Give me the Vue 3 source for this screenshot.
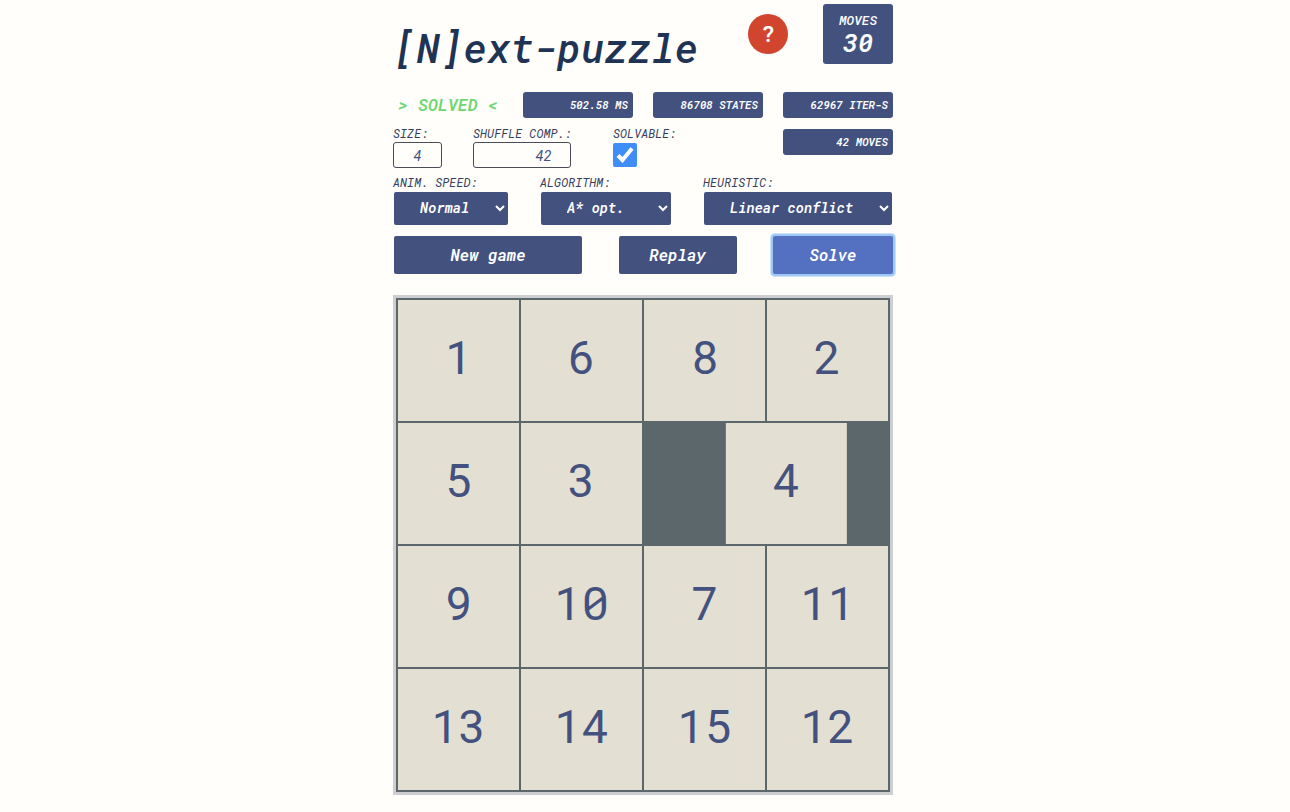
<script setup>
import { ref } from 'vue'

const stats = ['502.58 MS', '86708 STATES', '62967 ITER-S']
const size = ref('4')
const shuffle = ref('42')
const solvable = ref(true)
const speed = ref('Normal')
const algorithm = ref('A* opt.')
const heuristic = ref('Linear conflict')

// 0 marks the hole; shift is the part of a tile already travelled to the left
const tiles = [1, 6, 8, 2, 5, 3, 0, 4, 9, 10, 7, 11, 13, 14, 15, 12]
const moving = { value: 4, shift: 34 }

function tileStyle(tile) {
  return tile === moving.value ? { transform: `translateX(-${moving.shift}%)` } : null
}
</script>

<template>
  <main class="page">
    <div class="game">
      <header class="header">
        <h1 class="title">[N]ext-puzzle</h1>
        <button class="help" type="button" aria-label="Help">?</button>
        <div class="moves">
          <span class="moves-label">MOVES</span>
          <span class="moves-count">30</span>
        </div>
      </header>

      <section class="results">
        <span class="status">&gt; SOLVED &lt;</span>
        <span v-for="stat in stats" :key="stat" class="stat">{{ stat }}</span>
      </section>

      <section class="settings">
        <div class="field field-size">
          <label for="size">SIZE:</label>
          <input id="size" v-model="size" class="box box-center" type="text" />
        </div>
        <div class="field field-shuffle">
          <label for="shuffle">SHUFFLE COMP.:</label>
          <input id="shuffle" v-model="shuffle" class="box box-right" type="text" />
        </div>
        <div class="field">
          <label for="solvable">SOLVABLE:</label>
          <span class="tick">
            <input id="solvable" v-model="solvable" type="checkbox" />
            <svg v-if="solvable" viewBox="0 0 24 24" aria-hidden="true">
              <path d="M5 12.5 9.5 17 19 5.5" />
            </svg>
          </span>
        </div>
        <span class="stat stat-last">42 MOVES</span>
      </section>

      <section class="selects">
        <div class="field speed">
          <label for="speed">ANIM. SPEED:</label>
          <div class="select">
            <select id="speed" v-model="speed">
              <option>Normal</option>
            </select>
            <svg viewBox="0 0 10 6" aria-hidden="true"><path d="M1 1l4 4 4-4" /></svg>
          </div>
        </div>
        <div class="field algorithm">
          <label for="algorithm">ALGORITHM:</label>
          <div class="select">
            <select id="algorithm" v-model="algorithm">
              <option>A* opt.</option>
            </select>
            <svg viewBox="0 0 10 6" aria-hidden="true"><path d="M1 1l4 4 4-4" /></svg>
          </div>
        </div>
        <div class="field heuristic">
          <label for="heuristic">HEURISTIC:</label>
          <div class="select">
            <select id="heuristic" v-model="heuristic">
              <option>Linear conflict</option>
            </select>
            <svg viewBox="0 0 10 6" aria-hidden="true"><path d="M1 1l4 4 4-4" /></svg>
          </div>
        </div>
      </section>

      <section class="actions">
        <button class="action new-game" type="button">New game</button>
        <button class="action replay" type="button">Replay</button>
        <button class="action solve" type="button">Solve</button>
      </section>

      <section class="board">
        <div
          v-for="tile in tiles"
          :key="tile"
          class="tile"
          :class="{ hole: tile === 0 }"
          :style="tileStyle(tile)"
        >{{ tile || '' }}</div>
      </section>
    </div>
  </main>
</template>

<style>
body {
  background: #fffefa;
}
</style>

<style scoped>
.page {
  display: flex;
  justify-content: center;
  padding: 4px 4px 16px 0;
  color: #35405f;
  font: italic 14px 'Roboto Mono', 'DejaVu Sans Mono', monospace;
}

.page * {
  box-sizing: border-box;
}

button,
input,
select {
  margin: 0;
  font: inherit;
}

.game {
  width: 100%;
  max-width: 500px;
}

.header {
  display: flex;
  align-items: flex-start;
}

.title {
  flex: 1;
  margin: 20px 0 0;
  color: #1f3355;
  font-size: 40px;
  font-weight: 500;
  line-height: 48px;
  white-space: nowrap;
}

.help {
  width: 40px;
  height: 40px;
  margin: 10px 35px 0 0;
  padding: 0 0 2px;
  border: 0;
  border-radius: 50%;
  background: #d1442d;
  color: #fff;
  font: 600 22px 'Roboto Mono', Roboto, monospace;
}

.moves {
  display: flex;
  flex-direction: column;
  align-items: center;
  width: 70px;
  height: 60px;
  padding-top: 8px;
  border-radius: 3px;
  background: #43517f;
  color: #fff;
}

.moves-label {
  font-size: 13px;
  font-weight: 500;
  line-height: 16px;
}

.moves-count {
  font-size: 26px;
  font-weight: 600;
  line-height: 28px;
}

.results {
  display: flex;
  gap: 20px;
  margin-top: 20px;
}

.status {
  flex: 1;
  padding-left: 5px;
  color: #6fd772;
  font-size: 17px;
  font-weight: 600;
  line-height: 26px;
  white-space: nowrap;
}

.stat {
  width: 110px;
  height: 26px;
  padding-right: 5px;
  border-radius: 3px;
  background: #43517f;
  color: #fff;
  font-size: 11px;
  font-weight: 600;
  line-height: 26px;
  text-align: right;
}

.settings {
  display: flex;
  margin-top: 8px;
}

.field label {
  display: block;
  padding-bottom: 2px;
  font-size: 12px;
  line-height: 14px;
  white-space: nowrap;
}

.field-size {
  width: 80px;
}

.field-shuffle {
  width: 140px;
}

.box {
  display: block;
  height: 26px;
  border: 1px solid #4a4d58;
  border-radius: 3px;
  background: #fffefa;
  color: #43517f;
}

.box-center {
  width: 49px;
  text-align: center;
}

.box-right {
  width: 98px;
  padding-right: 18px;
  text-align: right;
}

.tick {
  position: relative;
  display: block;
  width: 24px;
  height: 24px;
  margin-top: 1px;
}

.tick input {
  display: block;
  width: 24px;
  height: 24px;
  border-radius: 2px;
  background: #3f8ef7;
  appearance: none;
}

.tick svg {
  position: absolute;
  inset: 0;
  fill: none;
  stroke: #fff;
  stroke-width: 4;
  pointer-events: none;
}

.stat-last {
  margin: 3px 0 0 auto;
}

.selects {
  display: flex;
  justify-content: space-between;
  margin-top: 7px;
}

.speed {
  width: 116px;
}

.algorithm {
  width: 132px;
}

.heuristic {
  width: 190px;
}

.select {
  position: relative;
  margin: 1px 1px 0;
}

.select select {
  display: block;
  width: 100%;
  height: 33px;
  padding: 0 0 2px 26px;
  border: 0;
  border-radius: 2px;
  background: #43517f;
  color: #fff;
  font-weight: 600;
  appearance: none;
}

.select svg {
  position: absolute;
  top: 13px;
  right: 3px;
  width: 10px;
  height: 6px;
  overflow: visible;
  fill: none;
  stroke: #fff;
  stroke-width: 2;
  pointer-events: none;
}

.actions {
  display: flex;
  justify-content: space-between;
  margin: 11px 0 0;
  padding-left: 1px;
}

.action {
  height: 38px;
  padding: 0 0 2px;
  border: 0;
  border-radius: 2px;
  background: #43517f;
  color: #fff;
  font-size: 16px;
  font-weight: 600;
}

.new-game {
  width: 188px;
}

.replay {
  width: 118px;
}

.solve {
  width: 120px;
  background: #5470c0;
  box-shadow: 0 0 0 2px #9cc9f8, 0 0 0 3px #cfe2f8;
}

.board {
  display: grid;
  grid-template-columns: repeat(4, 1fr);
  gap: 2px;
  margin-top: 21px;
  padding: 2px;
  border: 3px solid #cbcfd1;
  background: #5b676a;
}

.tile {
  display: flex;
  align-items: center;
  justify-content: center;
  aspect-ratio: 1;
  padding-bottom: 10px;
  background: #e3dfd2;
  color: #43517f;
  font: 400 46px 'Roboto Mono', Roboto, sans-serif;
}

.hole {
  background: none;
}
</style>
